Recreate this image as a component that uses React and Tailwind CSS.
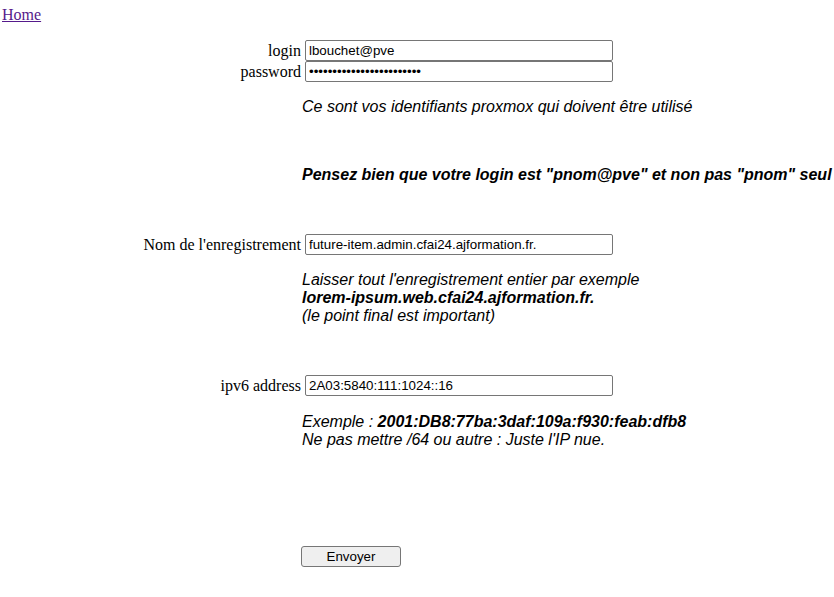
import React from "react";

const serif = { fontFamily: '"Liberation Serif", "Times New Roman", serif' };

function Row({ label, children, className = "" }) {
  return (
    <div className={"flex items-center " + className}>
      <div className="w-[303px] shrink-0 pr-[2px] text-right text-[16px] leading-[18px] text-black font-['Liberation_Serif',serif]">
        {label}
      </div>
      <div className="pl-[2px]">{children}</div>
    </div>
  );
}

function Field({ type = "text", value }) {
  return (
    <input
      type={type}
      readOnly
      value={value}
      className="block h-[21px] w-[308px] rounded-[2px] border border-[#767676] bg-white px-[3px] text-[13.333px] text-black outline-none font-['Liberation_Sans',Arial,sans-serif]"
    />
  );
}

function Note({ children, className = "" }) {
  return (
    <div
      className={
        "ml-[302px] whitespace-nowrap text-[16px] italic leading-[18px] text-black font-['Liberation_Sans',Arial,sans-serif] " +
        className
      }
    >
      {children}
    </div>
  );
}

export default function App() {
  return (
    <div className="relative h-[597px] w-[834px] overflow-hidden bg-white" style={serif}>
      <div className="pl-[2px] pt-[6px] text-[16px] leading-[18px] font-['Liberation_Serif',serif]">
        <a href="#" className="text-[#551a8b] underline">
          Home
        </a>
      </div>

      <div className="mt-[16px] flex flex-col">
        <Row label="login">
          <Field value="lbouchet@pve" />
        </Row>
        <Row label="password">
          <Field type="password" value="abcdefghijklmnopqrstuvwx" />
        </Row>
      </div>

      <Note className="mt-[16px]">Ce sont vos identifiants proxmox qui doivent être utilisé</Note>

      <Note className="mt-[50px] font-bold">
        Pensez bien que votre login est "pnom@pve" et non pas "pnom" seul
      </Note>

      <Row label="Nom de l'enregistrement" className="mt-[50px]">
        <Field value="future-item.admin.cfai24.ajformation.fr." />
      </Row>

      <div className="mt-[16px]">
        <Note>Laisser tout l'enregistrement entier par exemple</Note>
        <Note className="font-bold">lorem-ipsum.web.cfai24.ajformation.fr.</Note>
        <Note>(le point final est important)</Note>
      </div>

      <Row label="ipv6 address" className="mt-[50px]">
        <Field value="2A03:5840:111:1024::16" />
      </Row>

      <div className="mt-[17px]">
        <Note>
          Exemple : <b>2001:DB8:77ba:3daf:109a:f930:feab:dfb8</b>
        </Note>
        <Note>Ne pas mettre /64 ou autre : Juste l'IP nue.</Note>
      </div>

      <div className="ml-[301px] mt-[95px]">
        <button
          type="button"
          className="h-[21px] w-[100px] rounded-[3px] border border-[#767676] bg-[#efefef] text-[13.333px] text-black font-['Liberation_Sans',Arial,sans-serif]"
        >
          Envoyer
        </button>
      </div>
    </div>
  );
}
